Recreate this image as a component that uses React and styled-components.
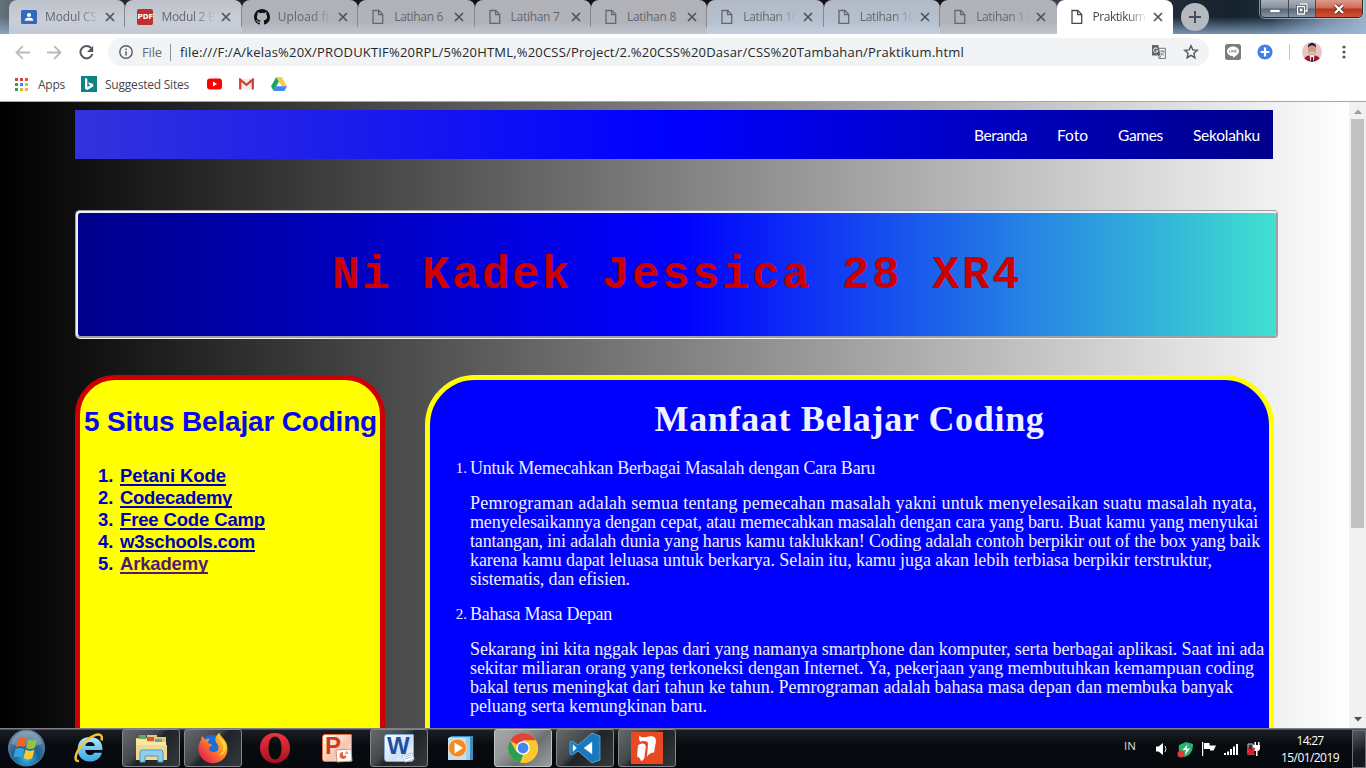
import React, { useLayoutEffect, useRef, useState } from "react";
import styled, { createGlobalStyle, css } from "styled-components";

const Global = createGlobalStyle`
  * { box-sizing: border-box; }
  body { margin: 0; overflow: hidden; }
  svg { display: block; flex: none; }
`;

const UI_FONT = '"Open Sans", "Noto Sans", sans-serif';

/* ---------- text set to a known measure ---------- */

const Measured = styled.span`
  display: inline-block;
  white-space: nowrap;
  text-decoration: inherit;
`;

function FitText({ width, children }) {
  const ref = useRef(null);
  const [spacing, setSpacing] = useState(0);
  useLayoutEffect(() => {
    const natural = ref.current.getBoundingClientRect().width;
    setSpacing((width - natural) / Math.max(1, children.length));
  }, [width, children]);
  return (
    <Measured ref={ref} style={{ letterSpacing: `${spacing}px` }}>
      {children}
    </Measured>
  );
}

/* ---------- window ---------- */

const Window = styled.div`
  width: 1366px;
  height: 768px;
  display: flex;
  flex-direction: column;
  overflow: hidden;
  background: #fff;
  font-family: ${UI_FONT};
`;

const TabStrip = styled.div`
  height: 34px;
  flex: none;
  display: flex;
  align-items: flex-start;
  padding-left: 9px;
  background: linear-gradient(180deg, rgba(190, 215, 240, 0) 50%, rgba(150, 185, 220, 0.75) 100%),
    linear-gradient(90deg, #67737b 0, #2a2e38 4%, #101018 30%, #10111a 70%, #4a5260 80%, #202a38 86%, #16222d 90%, #1d2d3a 93%, #71869b 97%, #9fb1c4 100%);
`;

const TAB_TINTS = {
  light: "linear-gradient(180deg, #bcc0c9 0%, #c9cdd5 55%, #c3c9d5 100%)",
  plain: "linear-gradient(180deg, #b1b2b8 0%, #b1b3ba 65%, #bfc4d1 100%)",
  blue: "linear-gradient(180deg, #b2bac5 0%, #b6c1cf 65%, #c4d0e0 100%)",
};

const Tab = styled.div`
  position: relative;
  width: 116.4px;
  height: 34px;
  flex: none;
  display: flex;
  align-items: center;
  padding: 0 9px 0 12px;
  border-radius: 8px 8px 0 0;
  color: ${(p) => (p.$active ? "#45484c" : "#64676d")};
  background: ${(p) => (p.$active ? "#fff" : TAB_TINTS[p.$tint])};
  ${(p) =>
    p.$divider &&
    css`
      &::after {
        content: "";
        position: absolute;
        right: 0;
        top: 7px;
        height: 20px;
        width: 1px;
        background: #85888f;
      }
    `}
`;

const TabTitle = styled.div`
  width: 56px;
  margin: 0 3px 0 8px;
  flex: none;
  white-space: nowrap;
  font-size: 12px;
  line-height: 18px;
  ${(p) => p.$fade && "mask-image: linear-gradient(90deg, #000 60%, transparent 96%);"}
`;

const NewTab = styled.div`
  width: 28px;
  height: 28px;
  margin: 3px 0 0 8px;
  border-radius: 50%;
  background: #b5bac1;
  display: grid;
  place-items: center;
`;

const WindowButtons = styled.div`
  margin-left: auto;
  margin-right: 3px;
  height: 18px;
  display: flex;
  border: 1px solid #272d35;
  border-top: 0;
  border-radius: 0 0 5px 5px;
  box-shadow: 0 0 0 1px rgba(220, 230, 240, 0.55);
  overflow: hidden;
`;

const WindowButton = styled.div`
  width: ${(p) => p.$w}px;
  display: grid;
  place-items: center;
  border-right: ${(p) => (p.$close ? 0 : "1px solid #414b57")};
  background: ${(p) =>
    p.$close
      ? "linear-gradient(180deg, #dd9a88 0%, #cf6a55 48%, #b8321c 52%, #cc5434 100%)"
      : "linear-gradient(180deg, #a9b1bb 0%, #848f9c 48%, #596675 52%, #8595a8 100%)"};
`;

const Toolbar = styled.div`
  height: 35px;
  flex: none;
  display: flex;
  align-items: center;
  padding: 1px 0 0 15px;
  gap: 17px;
`;

const Omnibox = styled.div`
  width: 1101px;
  height: 28px;
  margin-left: -3px;
  border-radius: 14px;
  background: #f1f3f4;
  display: flex;
  align-items: center;
  padding: 0 10px 0 11px;
  font-size: 13px;
  color: #26282b;
`;

const Scheme = styled.span`
  margin-left: 9px;
  padding-right: 8px;
  width: 29px;
  border-right: 1px solid #8d9196;
  color: #66696d;
  line-height: 17px;
`;

const Url = styled.span`
  margin-left: 9px;
  flex: 1;
`;

const OmniIcons = styled.div`
  display: flex;
  gap: 16px;
`;

const Extensions = styled.div`
  display: flex;
  align-items: center;
  gap: 16px;
  margin-left: -1px;
`;

const Rule = styled.div`
  width: 1px;
  height: 16px;
  margin-right: -4px;
  background: #c3c6ca;
`;

const Bookmarks = styled.div`
  height: 33px;
  flex: none;
  display: flex;
  align-items: center;
  padding: 0 0 2px 15px;
  border-bottom: 1px solid #a5a6a8;
  font-size: 12px;
  color: #46494d;
`;

const Bookmark = styled.div`
  display: flex;
  align-items: center;
  gap: ${(p) => p.$gap || 0}px;
  margin-right: ${(p) => p.$after}px;
`;

/* ---------- page ---------- */

const Viewport = styled.div`
  height: 626px;
  flex: none;
  display: flex;
  overflow: hidden;
`;

const Page = styled.div`
  width: 1349px;
  height: 626px;
  padding: 8px 70px 0 75px;
  overflow: hidden;
  background: linear-gradient(to right, black, gray, white);
`;

const Nav = styled.nav`
  width: 1198px;
  height: 49px;
  display: flex;
  justify-content: flex-end;
  align-items: center;
  gap: 30px;
  padding: 0 13px 0 0;
  background: linear-gradient(to right, #3333dd, blue, darkblue);
  color: #fff;
  font: 15.5px/20px Lato, "Liberation Sans", sans-serif;
`;

const NavLink = styled.div`
  width: ${(p) => p.$w}px;
  white-space: nowrap;
`;

const Banner = styled.header`
  width: 1204px;
  height: 129px;
  margin-top: 51px;
  border: 3px groove #f0f0f8;
  border-radius: 5px;
  background: linear-gradient(to right, darkblue, blue, turquoise) padding-box;
  display: flex;
  align-items: center;
  justify-content: center;
  color: #cc0000;
  font: bold 46px/52px "Liberation Mono", monospace;
  padding-top: 2px;
`;

const Columns = styled.div`
  display: flex;
  gap: 40px;
  margin-top: 36px;
`;

const Sidebar = styled.aside`
  width: 310px;
  height: 600px;
  border: 5px solid #cc0000;
  border-radius: 40px;
  background: yellow;
  color: #0000cc;
  padding-top: 25px;
  font-family: "Liberation Sans", Arial, sans-serif;
  font-weight: bold;
`;

const SideTitle = styled.h1`
  margin: 0 0 26px;
  padding-left: 4px;
  font-size: 28px;
  line-height: 34px;
  color: #0808e8;
`;

const SiteList = styled.ol`
  margin: 0;
  padding: 0 0 0 18px;
  list-style: none;
  font-size: 18.5px;
  line-height: 22px;
`;

const Site = styled.li`
  display: flex;
`;

const Num = styled.span`
  width: 22px;
  flex: none;
`;

const SiteLink = styled.a`
  color: ${(p) => (p.$visited ? "#551a6b" : "#0000b8")};
  text-decoration: underline 2px;
  text-underline-offset: 2px;
  text-decoration-skip-ink: none;
`;

const Article = styled.main`
  width: 849px;
  height: 600px;
  flex: none;
  border: 5px solid yellow;
  border-radius: 50px;
  background: blue;
  color: #f0f0ff;
  padding-top: 20px;
  font: 18px/19px "Liberation Serif", "Times New Roman", serif;
`;

const ArticleTitle = styled.h1`
  margin: 0 0 21px;
  text-align: center;
  font-size: 36px;
  line-height: 38px;
`;

const Benefit = styled.section`
  padding-left: 40px;
  margin-bottom: 16px;
`;

const BenefitHead = styled.div`
  display: flex;
  margin: 0 0 16px -19px;
`;

const BenefitNum = styled.span`
  width: 19px;
  padding-right: 3px;
  text-align: right;
  font-size: 15px;
`;

const Line = styled.div`
  height: 19px;
  white-space: nowrap;
`;

const Scrollbar = styled.div`
  width: 17px;
  background: #f1f1f1;
  display: flex;
  flex-direction: column;
  align-items: center;
  justify-content: space-between;
  padding: 7px 0 6px;
`;

const Thumb = styled.div`
  width: 13px;
  height: 409px;
  margin: 5px 0 auto;
  background: #c1c1c1;
`;

/* ---------- taskbar ---------- */

const Taskbar = styled.div`
  height: 40px;
  flex: none;
  display: flex;
  background: linear-gradient(180deg, #7c8084 0, #7c8084 1px, #1a1e22 2px, #070b0f 45%, #05090d 100%);
  color: #fff;
  font-size: 12px;
`;

const Start = styled.div`
  width: 60px;
  padding: 1px 0 0 7px;
`;

const Apps = styled.div`
  display: flex;
  gap: 4px;
  padding-top: 1px;
`;

const TaskButton = styled.div`
  width: 58px;
  height: 38px;
  display: grid;
  place-items: center;
  border-radius: 3px;
  ${(p) =>
    p.$state &&
    css`
      border: 1px solid ${p.$state === "active" ? "#c2c5c7" : "#83878b"};
      background: ${p.$state === "active"
        ? "linear-gradient(135deg, #a6a8aa 0%, #949698 35%, #6d7073 60%, #9b9d9f 100%)"
        : "linear-gradient(135deg, #66696c 0%, #44474a 40%, #202427 50%, #34383b 100%)"};
    `}
`;

const Tray = styled.div`
  margin-left: auto;
  display: flex;
  align-items: center;
  padding-top: 2px;
`;

const Lang = styled.span`
  width: 31px;
  font-size: 11.5px;
  padding-bottom: 7px;
  color: #dedede;
`;

const TrayIcons = styled.div`
  display: flex;
  align-items: center;
  gap: 8px;
`;

const Clock = styled.div`
  width: 84px;
  margin-left: 7px;
  text-align: center;
  line-height: 17px;
`;

const ShowDesktop = styled.div`
  width: 14px;
  height: 38px;
  border: 1px solid #6b7074;
  background: linear-gradient(160deg, #55595d, #15191d 60%);
`;

/* ---------- icons ---------- */

const FileIcon = () => (
  <svg width="16" height="16" viewBox="0 0 16 16" fill="none" stroke="currentColor" strokeWidth="1.3">
    <path d="M3 1.500h5.800l3.900 3.900v9H3zM8.600 1.500v4.200h4.100" />
  </svg>
);
const PersonIcon = () => (
  <svg width="16" height="16" viewBox="0 0 16 16">
    <rect y="1" width="16" height="14" rx="1.5" fill="#2f6ac0" />
    <circle cx="8" cy="6" r="2.1" fill="#fff" />
    <path d="M3.7 11.8c0-2.5 2.2-3 4.3-3s4.3.5 4.3 3z" fill="#fff" />
  </svg>
);
const PdfText = styled.span`
  width: 16px;
  height: 16px;
  flex: none;
  border-radius: 2px;
  background: #bf2f2b;
  color: #fff;
  font: bold 7px/16px "DejaVu Sans", sans-serif;
  text-align: center;
`;
const GithubIcon = () => (
  <svg width="16" height="16" viewBox="0 0 16 16" fill="#101216">
    <path d="M8 0C3.58 0 0 3.58 0 8c0 3.54 2.29 6.53 5.47 7.59.4.07.55-.17.55-.38 0-.19-.01-.82-.01-1.49-2.01.37-2.53-.49-2.69-.94-.09-.23-.48-.94-.82-1.13-.28-.15-.68-.52-.01-.53.63-.01 1.08.58 1.23.82.72 1.21 1.87.87 2.33.66.07-.52.28-.87.51-1.07-1.78-.2-3.64-.89-3.64-3.95 0-.87.31-1.59.82-2.15-.08-.2-.36-1.02.08-2.12 0 0 .67-.21 2.2.82a7.6 7.6 0 0 1 4 0c1.53-1.04 2.2-.82 2.2-.82.44 1.1.16 1.92.08 2.12.51.56.82 1.27.82 2.15 0 3.07-1.87 3.75-3.65 3.95.29.25.54.73.54 1.48 0 1.07-.01 1.93-.01 2.2 0 .21.15.46.55.38A8.01 8.01 0 0 0 16 8c0-4.42-3.58-8-8-8z" />
  </svg>
);
const CloseX = () => (
  <svg width="12" height="12" viewBox="0 0 12 12" stroke="#505359" strokeWidth="1.7">
    <path d="M2 2l8 8M10 2l-8 8" />
  </svg>
);
const PlusIcon = () => (
  <svg width="14" height="14" viewBox="0 0 14 14" stroke="#484e56" strokeWidth="2">
    <path d="M7 1v12M1 7h12" />
  </svg>
);
const Arrow = ({ flip }) => (
  <svg width="15" height="15" viewBox="0 0 15 15" fill="none" stroke="#b9babc" strokeWidth="1.8" transform={flip ? "scale(-1 1)" : undefined}>
    <path d="M15 7.5H1.6M7.8 1.2L1.5 7.5l6.3 6.3" />
  </svg>
);
const Reload = () => (
  <svg width="15" height="15" viewBox="0 0 15 15">
    <path d="M12.2 3.2A6.1 6.1 0 1 0 13.4 9" fill="none" stroke="#54575b" strokeWidth="2" />
    <path d="M14.2.8v6.1H8.1z" fill="#54575b" />
  </svg>
);
const Info = () => (
  <svg width="14" height="14" viewBox="0 0 14 14">
    <circle cx="7" cy="7" r="6.2" fill="none" stroke="#5a5d61" strokeWidth="1.4" />
    <path d="M7 6.2v4.2M7 3.5v1.5" stroke="#5a5d61" strokeWidth="1.5" />
  </svg>
);
const Translate = () => (
  <svg width="16" height="16" viewBox="0 0 16 16">
    <path d="M7 4.3h7.4v10.2H8z" fill="#f4f4f4" stroke="#75787c" />
    <path d="M1 1h6.3l2.3 10.5H1z" fill="#63666a" />
    <path d="M6.6 5.1A2.2 2.2 0 1 0 6.8 6.8H4.9" fill="none" stroke="#fff" strokeWidth="1" />
    <path d="M9.2 7.2h4.3M11.2 6v1.2M12.8 7.4c-.5 2-1.6 3-2.7 3.7M10 8.5c.6 1.4 1.7 2.2 2.9 3M8.5 14.3l1.3-2.6" fill="none" stroke="#75787c" strokeWidth=".9" />
  </svg>
);
const Star = () => (
  <svg width="16" height="16" viewBox="0 0 16 16" fill="none" stroke="#55585c" strokeWidth="1.4">
    <path d="M8 1.8l1.8 4.1 4.5.4-3.4 3 1 4.4L8 11.4l-3.9 2.3 1-4.4-3.4-3 4.5-.4z" />
  </svg>
);
const LineIcon = () => (
  <svg width="16" height="16" viewBox="0 0 16 16">
    <rect width="16" height="16" rx="2.5" fill="#7d7d7d" />
    <path d="M8 2.4c3.5 0 6 2.2 6 4.8 0 2.700-3.800 5.300-6 6.600V12C4.500 12 2 9.800 2 7.200S4.500 2.400 8 2.400z" fill="#fff" />
    <path d="M4.300 6v2.300h1.200M6.400 6v2.300M7.400 8.300V6l1.500 2.300V6M11.500 6H10v2.300h1.500M10 7.100h1.400" fill="none" stroke="#7d7d7d" strokeWidth=".6" />
  </svg>
);
const BluePlus = () => (
  <svg width="16" height="16" viewBox="0 0 16 16">
    <circle cx="8" cy="8" r="7.600" fill="#427fed" />
    <path d="M8 3.600v8.800M3.600 8h8.800" stroke="#fff" strokeWidth="2.200" />
  </svg>
);
const Avatar = () => (
  <svg width="20" height="20" viewBox="0 0 20 20">
    <defs><clipPath id="av"><circle cx="10" cy="10" r="10" /></clipPath></defs>
    <g clipPath="url(#av)">
      <rect width="20" height="20" fill="#e5c4cc" />
      <path d="M1.500 20c0-5 3.500-7 8.500-7s8.500 2 8.500 7z" fill="#a3152d" />
      <path d="M7.500 12.500h5L11.500 20h-3z" fill="#f3f0f2" />
      <path d="M9.400 15h1.400l.5 5H8.900z" fill="#22243a" />
      <ellipse cx="10" cy="7.800" rx="4" ry="5.300" fill="#cf9880" />
      <path d="M6 6C5.500 2.500 7.500 1 10 1s4.500 1.500 4 5C13 4 12 3.500 10 3.500S7 4 6 6z" fill="#272024" />
      <path d="M8 10.300q2 1.500 4 0" stroke="#fff" strokeWidth=".8" fill="none" />
    </g>
  </svg>
);
const Dots = () => (
  <svg width="4" height="14" viewBox="0 0 4 14" fill="#55585c" style={{ marginLeft: 4 }}>
    <circle cx="2" cy="2" r="1.600" /><circle cx="2" cy="7" r="1.600" /><circle cx="2" cy="12" r="1.600" />
  </svg>
);
const AppsGrid = () => {
  const colors = ["#d84437", "#d84437", "#e0523e", "#2ba35c", "#3f82ef", "#f0b52c", "#2ba35c", "#e5b52f", "#f0b52c"];
  return (
    <svg width="13" height="13" viewBox="0 0 13 13">
      {colors.map((c, i) => (
        <rect key={i} x={(i % 3) * 5} y={Math.floor(i / 3) * 5} width="3" height="3" fill={c} />
      ))}
    </svg>
  );
};
const Bing = () => (
  <svg width="16" height="16" viewBox="0 0 16 16">
    <rect width="16" height="16" fill="#0c8484" />
    <path d="M4 2l2.300.8v8.300L9.500 9.300 8 8.600 7 6.200l5.200 1.800v2.500L6.300 14 4 12.700z" fill="#fff" />
  </svg>
);
const YouTube = () => (
  <svg width="15" height="12" viewBox="0 0 15 12">
    <rect y=".5" width="15" height="11" rx="3" fill="#f00" />
    <path d="M6 3.600v4.800L10 6z" fill="#fff" />
  </svg>
);
const Gmail = () => (
  <svg width="15" height="12" viewBox="0 0 15 12">
    <rect x="1" y=".8" width="13" height="10.700" fill="#ececec" />
    <path d="M1.200 11.500V1.600l6.300 5.200 6.300-5.200v9.900" fill="none" stroke="#d23f32" strokeWidth="2.200" />
  </svg>
);
const Drive = () => (
  <svg width="16" height="14" viewBox="0 0 16 14">
    <path d="M5.300 0L0 9.200 2.600 14 8 4.600z" fill="#1fa463" />
    <path d="M5.300 0h5.400L16 9.200h-5.300z" fill="#fccd3f" />
    <path d="M5.300 9.200H16L13.400 14H2.600z" fill="#4387f5" />
  </svg>
);
const Triangle = ({ up }) => (
  <svg width="8" height="5" viewBox="0 0 8 5">
    <path d={up ? "M0 5L4 .5 8 5z" : "M0 0h8L4 4.500z"} fill={up ? "#9b9b9b" : "#4f4f4f"} />
  </svg>
);
const StartOrb = () => (
  <svg width="39" height="38" viewBox="0 0 39 38">
    <defs>
      <radialGradient id="orb" cx=".5" cy=".8" r=".8">
        <stop offset="0" stopColor="#2db5ee" /><stop offset=".45" stopColor="#1c5f92" /><stop offset="1" stopColor="#718ca5" />
      </radialGradient>
    </defs>
    <circle cx="19.500" cy="19" r="18" fill="url(#orb)" stroke="#5c7c98" />
    <path d="M4 15C6 6 14 2 20 2s13 4 15 13C26 18 13 18 4 15z" fill="#fff" opacity=".22" />
    <g transform="translate(-2.500 -2) scale(1.130)">
      <path d="M12 10.500c2.500-2 5.200-1.500 7.700-.2l-1.900 7.700c-2.500-1.300-5-1.500-7.700.1z" fill="#ec6428" />
      <path d="M21 11c2.600 1.300 5 1.500 7.800-.2l-1.900 7.500c-2.600 1.600-5.200 1.400-7.800.2z" fill="#93c63f" />
      <path d="M9.700 19.800c2.600-1.700 5.200-1.400 7.700-.2l-1.900 7.600c-2.500-1.300-5-1.500-7.700.2z" fill="#36a3e0" />
      <path d="M18.700 20.200c2.600 1.300 5.200 1.400 7.800-.2l-1.900 7.600c-2.700 1.600-5.200 1.400-7.800.1z" fill="#fbc82f" />
    </g>
  </svg>
);
const Explorer = () => (
  <svg width="33" height="30" viewBox="0 0 33 30">
    <path d="M1 5h11V2h10v2h9v22H1z" fill="#e4c872" />
    <path d="M4 2h7v4H4z" fill="#58ac5a" /><path d="M12 4h7v4h-7z" fill="#d9563d" /><path d="M20 6h7v4h-7z" fill="#5b9bd6" />
    <path d="M1 6h10l2 3h18l1 18H1z" fill="#f7e6a4" />
    <path d="M1 12h31v15H1z" fill="#efd98d" />
    <path d="M5 29V19q0-2 2-2h19q2 0 2 2v10h-5v-6H10v6z" fill="#93cdec" stroke="#4c98ca" />
  </svg>
);
const IE = () => (
  <svg width="32" height="32" viewBox="0 0 32 32">
    <defs><linearGradient id="ie" x2="0" y2="1"><stop stopColor="#b1e7fc" /><stop offset="1" stopColor="#35a7e5" /></linearGradient></defs>
    <path fillRule="evenodd" d="M29.500 18H12.200c.2 3.200 2 5 4.800 5 2 0 3.500-.8 4.200-2.300h7.700C27.500 26.300 22.800 29.500 17 29.500 9.500 29.500 4.700 24.700 4.700 17S9.600 5 17.200 5C25 5 29.800 10 29.500 18zM12.300 14h9.500c-.3-2.500-2-4-4.600-4s-4.400 1.500-4.900 4z" fill="url(#ie)" />
    <path d="M28.500 8.500c1-3 .2-6-2.700-6C20 2.500 10 9.500 5 18.500c-3.500 6.500-3.300 11 1 10.500" fill="none" stroke="#f6c42e" strokeWidth="2.400" />
  </svg>
);
const Firefox = () => (
  <svg width="32" height="32" viewBox="0 0 32 32">
    <defs><linearGradient id="ff" x1="1" x2="0" y2="1"><stop stopColor="#ffdd3d" /><stop offset=".4" stopColor="#ff9420" /><stop offset=".8" stopColor="#ed2e49" /></linearGradient></defs>
    <circle cx="15" cy="14" r="11" fill="#1b6fdd" />
    <path d="M4 8c0-2 .5-3 1.500-4L8 7.500c2-1 4-.8 5-.5-2 1.500-2.500 3-1.500 4.500l3.500 1c0 1.500-1.500 2-3 3-1 3 2.500 5 5.500 4.500 5-.5 5-6 2-9C17 7 19 3 22.500 1c1 4 8 7 8 15.500A14.500 14.500 0 0 1 1.500 17C1.500 13 2.500 10 4 8z" fill="url(#ff)" />
    <path d="M21 4c0 4 6 6 5.500 12-.3 4-2.500 6.500-5 8 8-1.500 10-11 4-16z" fill="#ffd93b" />
  </svg>
);
const Opera = () => (
  <svg width="32" height="32" viewBox="0 0 32 32">
    <defs><linearGradient id="op" x2="0" y2="1"><stop stopColor="#ee3540" /><stop offset="1" stopColor="#a8101c" /></linearGradient></defs>
    <path fillRule="evenodd" d="M16 1c9 0 15 6.500 15 15s-6 15-15 15S1 24.500 1 16 7 1 16 1zm0 3.500c-4 0-6.500 4.500-6.500 11.500S12 27.500 16 27.500s6.500-4.500 6.500-11.500S20 4.500 16 4.500z" fill="url(#op)" />
  </svg>
);
const OfficeBox = styled.div`
  position: relative;
  width: 30px;
  height: 28px;
  border: 1px solid ${(p) => p.$edge};
  border-radius: 3px 1px 3px 3px;
  background: linear-gradient(135deg, #fff 0%, ${(p) => p.$fill} 60%, #fff 100%);
  color: ${(p) => p.$ink};
  font: bold 24px/22px "Liberation Sans", sans-serif;
  padding-left: 2px;
  svg { position: absolute; right: -2px; bottom: -2px; }
`;
const PowerPoint = () => (
  <OfficeBox $edge="#e57147" $fill="#f8c3ad" $ink="#c93d1a">
    P
    <svg width="18" height="16" viewBox="0 0 18 16">
      <path d="M1 3l15-1 1 12-15 1z" fill="#fff" stroke="#e38b6c" />
      <path d="M8 5a3.500 3.500 0 1 0 3.500 4L8 8.500z" fill="#e16543" /><path d="M11 4a3 3 0 0 1 2.500 3H10z" fill="#ed9b7e" />
    </svg>
  </OfficeBox>
);
const Word = () => (
  <OfficeBox $edge="#83a9d9" $fill="#cddff5" $ink="#1c4f9f">
    W
    <svg width="14" height="11" viewBox="0 0 18 14">
      <path d="M1 5l13-4 3 8-12 4z" fill="#fff" stroke="#9ab5d8" />
      <path d="M4 6.500l9-3M5 9l9-3" stroke="#8aa9d2" />
    </svg>
  </OfficeBox>
);
const MediaPlayer = () => (
  <svg width="28" height="27" viewBox="0 0 28 27">
    <path d="M4 1h22v24H4z" fill="#3c8cbd" /><path d="M2 2h21v23H2z" fill="#9bd0ec" /><path d="M1 3h18v22H1z" fill="#bfe2f3" />
    <circle cx="10.500" cy="13" r="9" fill="#f48a22" stroke="#fcd6ab" /><path d="M7.500 7.500v11L16 13z" fill="#fff" />
  </svg>
);
const Chrome = () => (
  <svg width="32" height="32" viewBox="0 0 32 32">
    <circle cx="16" cy="16" r="15" fill="#fbc92f" />
    <path d="M16 16L3 8.500A15 15 0 0 1 29 8.500H16z" fill="#dc4538" />
    <path d="M3 8.500l6.500 11.300L16 23l-3 7.700A15 15 0 0 1 3 8.500z" fill="#2b9f55" />
    <path d="M16 8.500h13A15 15 0 0 1 14.500 31l7.500-11z" fill="#fbc92f" />
    <circle cx="16" cy="16" r="6.800" fill="#fff" /><circle cx="16" cy="16" r="5.400" fill="#4486f4" />
  </svg>
);
const VSCode = () => (
  <svg width="32" height="32" viewBox="0 0 32 32">
    <path fillRule="evenodd" d="M23 1l8 3v24l-8 3L9 19l-6 4-2-1V10l2-1 6 4zM23 10l-8 6 8 6zM4 12.500v7L7.500 16z" fill="#1879bf" stroke="#73b8e8" strokeWidth=".7" />
    <path d="M23 10v12l-8-6zM4 12.500v7L7.500 16z" fill="#fff" />
  </svg>
);
const Nitro = () => (
  <svg width="32" height="32" viewBox="0 0 32 32">
    <rect width="32" height="32" fill="#e94921" />
    <path d="M8.500 3.500c2 3 6 1.500 11 .8 4-.3 6 2.200 5.300 6.200L23 20.500c-3 .2-5.500 1.500-7 4.500l1-13c.2-2.500-2-3.500-5-3L9 9.500c-1-2-1.200-4-.5-6z" fill="#fff" />
    <path d="M7 13.500c2-2.500 7.500-3.500 7.800 1L13.500 25c-.3 2-1.500 3.500-3.500 4-.3-2-1.500-3.500-4-4.500z" fill="#fff" />
  </svg>
);
const Speaker = () => (
  <svg width="14" height="16" viewBox="0 0 14 16">
    <path d="M1 5.500h2.500L8 2v12l-4.500-3.500H1z" fill="#fff" /><path d="M10 5q2 3 0 6" fill="none" stroke="#ddd" />
  </svg>
);
const Shield = () => (
  <svg width="17" height="17" viewBox="0 0 17 17">
    <path d="M2 4l7-3 7 2c0 6-2 11-8 13C3 14 1 10 2 4z" fill="#28b46c" />
    <path d="M10.500 3.500L5.500 9H9l-1 5 5-6.500H9.500z" fill="#fff" />
    <circle cx="4" cy="13" r="3.500" fill="#e53a36" />
  </svg>
);
const Flag = () => (
  <svg width="14" height="16" viewBox="0 0 14 16" fill="#fff">
    <path d="M0 1h1.200v14H0zM2 2h5.500v2.500H14L11.500 9.500H8V8H2z" />
  </svg>
);
const Signal = () => (
  <svg width="15" height="12" viewBox="0 0 15 12" fill="#fff">
    <path d="M0 10h2v2H0zM3 8.500h2V12H3zM6 6h2v6H6zM9 3.500h2V12H9zM12 1h2v11h-2z" />
  </svg>
);
const Power = () => (
  <svg width="14" height="16" viewBox="0 0 14 16">
    <path d="M1 3h5v10H1z" fill="#333" stroke="#ccc" />
    <path d="M6 4h7v3c0 2-1 3-2.500 3v5H9v-5C7 10 6 9 6 7zM7.500 1H9v3H7.500zM11 1h1.500v3H11z" fill="#fff" />
    <path d="M.5 7l7 7M7.500 7l-7 7" stroke="#e8131d" strokeWidth="2.400" />
  </svg>
);
const MinGlyph = () => (
  <svg width="12" height="12" viewBox="0 0 12 12"><rect x="1" y="6.500" width="10" height="3" fill="#fff" stroke="#4d5864" strokeWidth=".6" /></svg>
);
const RestoreGlyph = () => (
  <svg width="12" height="12" viewBox="0 0 12 12" fill="none">
    <path d="M4 1h7v7H9M1 3.500h7.500V11H1z" stroke="#45505c" strokeWidth="2.600" />
    <path d="M4 1h7v7H9M1.500 3.500h7V11h-7zM4.500 6.500h1.200v1.200H4.500z" stroke="#fff" strokeWidth="1.300" />
  </svg>
);
const CloseGlyph = () => (
  <svg width="12" height="12" viewBox="0 0 12 12">
    <path d="M2 2l8 8M10 2l-8 8" stroke="#5c2d2a" strokeWidth="4" /><path d="M2 2l8 8M10 2l-8 8" stroke="#fff" strokeWidth="2.400" />
  </svg>
);

/* ---------- data ---------- */

const TABS = [
  { title: "Modul CS", w: 52, icon: <PersonIcon />, tint: "light", fade: true },
  { title: "Modul 2 B", w: 54, icon: <PdfText>PDF</PdfText>, tint: "light", fade: true },
  { title: "Upload fil", w: 54, icon: <GithubIcon />, tint: "plain", fade: true },
  { title: "Latihan 6", w: 49, icon: <FileIcon />, tint: "plain" },
  { title: "Latihan 7", w: 49, icon: <FileIcon />, tint: "plain" },
  { title: "Latihan 8", w: 49, icon: <FileIcon />, tint: "plain" },
  { title: "Latihan 10", w: 55, icon: <FileIcon />, tint: "blue", fade: true },
  { title: "Latihan 10", w: 55, icon: <FileIcon />, tint: "blue", fade: true },
  { title: "Latihan 11", w: 55, icon: <FileIcon />, tint: "plain", fade: true },
  { title: "Praktikum", w: 53, icon: <FileIcon />, active: true, fade: true },
];

const NAV = [["Beranda", 53], ["Foto", 31], ["Games", 45], ["Sekolahku", 67]];

const SITES = [["Petani Kode", 106], ["Codecademy", 112], ["Free Code Camp", 145], ["w3schools.com", 135], ["Arkademy", 88]];

const BENEFITS = [
  {
    head: ["Untuk Memecahkan Berbagai Masalah dengan Cara Baru", 405],
    lines: [
      ["Pemrograman adalah semua tentang pemecahan masalah yakni untuk menyelesaikan suatu masalah nyata,", 787],
      ["menyelesaikannya dengan cepat, atau memecahkan masalah dengan cara yang baru. Buat kamu yang menyukai", 788],
      ["tantangan, ini adalah dunia yang harus kamu taklukkan! Coding adalah contoh berpikir out of the box yang baik", 790],
      ["karena kamu dapat leluasa untuk berkarya. Selain itu, kamu juga akan lebih terbiasa berpikir terstruktur,", 742],
      ["sistematis, dan efisien.", 160],
    ],
  },
  {
    head: ["Bahasa Masa Depan", 142],
    lines: [
      ["Sekarang ini kita nggak lepas dari yang namanya smartphone dan komputer, serta berbagai aplikasi. Saat ini ada", 794],
      ["sekitar miliaran orang yang terkoneksi dengan Internet. Ya, pekerjaan yang membutuhkan kemampuan coding", 784],
      ["bakal terus meningkat dari tahun ke tahun. Pemrograman adalah bahasa masa depan dan membuka banyak", 763],
      ["peluang serta kemungkinan baru.", 237],
    ],
  },
];

const TASKS = [
  [<IE />, null], [<Explorer />, "open"], [<Firefox />, "open"], [<Opera />, null], [<PowerPoint />, null],
  [<Word />, "open"], [<MediaPlayer />, null], [<Chrome />, "active"], [<VSCode />, "open"], [<Nitro />, "open"],
];

export default function App() {
  return (
    <Window>
      <Global />
      <TabStrip>
        {TABS.map((t, i) => (
          <Tab key={i} $active={t.active} $tint={t.tint} $divider={i < 8}>
            {t.icon}
            <TabTitle $fade={t.fade}><FitText width={t.w}>{t.title}</FitText></TabTitle>
            <CloseX />
          </Tab>
        ))}
        <NewTab><PlusIcon /></NewTab>
        <WindowButtons>
          <WindowButton $w={28}><MinGlyph /></WindowButton>
          <WindowButton $w={27}><RestoreGlyph /></WindowButton>
          <WindowButton $w={46} $close><CloseGlyph /></WindowButton>
        </WindowButtons>
      </TabStrip>
      <Toolbar>
        <Arrow /><Arrow flip /><Reload />
        <Omnibox>
          <Info />
          <Scheme><FitText width={20}>File</FitText></Scheme>
          <Url>
            <FitText width={784}>file:///F:/A/kelas%20X/PRODUKTIF%20RPL/5%20HTML,%20CSS/Project/2.%20CSS%20Dasar/CSS%20Tambahan/Praktikum.html</FitText>
          </Url>
          <OmniIcons><Translate /><Star /></OmniIcons>
        </Omnibox>
        <Extensions>
          <LineIcon /><BluePlus /><Rule /><Avatar /><Dots />
        </Extensions>
      </Toolbar>
      <Bookmarks>
        <Bookmark $gap={10} $after={16}><AppsGrid /><FitText width={27}>Apps</FitText></Bookmark>
        <Bookmark $gap={8} $after={18}><Bing /><FitText width={84}>Suggested Sites</FitText></Bookmark>
        <Bookmark $after={17}><YouTube /></Bookmark>
        <Bookmark $after={17}><Gmail /></Bookmark>
        <Bookmark $after={0}><Drive /></Bookmark>
      </Bookmarks>
      <Viewport>
        <Page>
          <Nav>
            {NAV.map(([label, w]) => (
              <NavLink key={label} $w={w}><FitText width={w}>{label}</FitText></NavLink>
            ))}
          </Nav>
          <Banner><FitText width={690}>Ni Kadek Jessica 28 XR4</FitText></Banner>
          <Columns>
            <Sidebar>
              <SideTitle><FitText width={293}>5 Situs Belajar Coding</FitText></SideTitle>
              <SiteList>
                {SITES.map(([name, w], i) => (
                  <Site key={name}>
                    <Num>{i + 1}.</Num>
                    <SiteLink $visited={i === 4}><FitText width={w}>{name}</FitText></SiteLink>
                  </Site>
                ))}
              </SiteList>
            </Sidebar>
            <Article>
              <ArticleTitle><FitText width={390}>Manfaat Belajar Coding</FitText></ArticleTitle>
              {BENEFITS.map((b, i) => (
                <Benefit key={i}>
                  <BenefitHead>
                    <BenefitNum>{i + 1}.</BenefitNum>
                    <Line><FitText width={b.head[1]}>{b.head[0]}</FitText></Line>
                  </BenefitHead>
                  {b.lines.map(([text, w]) => (
                    <Line key={text}><FitText width={w}>{text}</FitText></Line>
                  ))}
                </Benefit>
              ))}
            </Article>
          </Columns>
        </Page>
        <Scrollbar>
          <Triangle up />
          <Thumb />
          <Triangle />
        </Scrollbar>
      </Viewport>
      <Taskbar>
        <Start><StartOrb /></Start>
        <Apps>
          {TASKS.map(([icon, state], i) => (
            <TaskButton key={i} $state={state}>{icon}</TaskButton>
          ))}
        </Apps>
        <Tray>
          <Lang>IN</Lang>
          <TrayIcons><Speaker /><Shield /><Flag /><Signal /><Power /></TrayIcons>
          <Clock>
            <div><FitText width={27}>14:27</FitText></div>
            <div><FitText width={58}>15/01/2019</FitText></div>
          </Clock>
          <ShowDesktop />
        </Tray>
      </Taskbar>
    </Window>
  );
}
